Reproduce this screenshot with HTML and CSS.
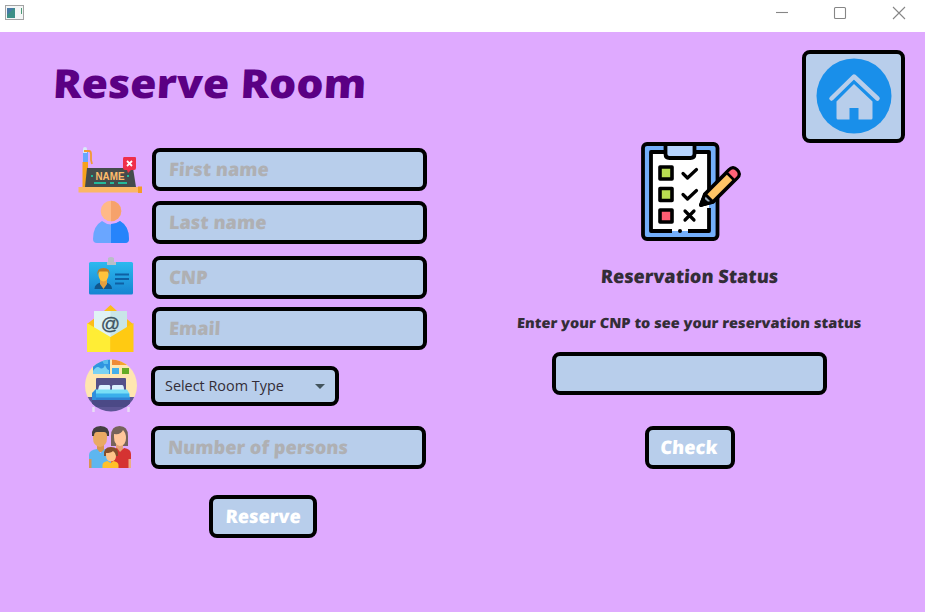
FILE: index.html
```html
<!DOCTYPE html>
<html lang="en">
<head>
<meta charset="utf-8">
<title>Reserve Room</title>
<link rel="stylesheet" href="styles.css">
</head>
<body>
<header class="titlebar">
  <svg class="app-icon" width="20" height="16" viewBox="5 5 20 16">
    <rect x="5.500" y="5.500" width="18" height="14" fill="#f4f6f6" stroke="#a3a3a3"/>
    <rect x="7" y="8" width="8" height="10" fill="#3c8f86"/><path d="M7 8h7l-7 7z" fill="#4779a5"/>
    <path d="M21.500 8v6" stroke="#4d9a78"/>
  </svg>
  <svg class="window-controls" width="140" height="26" viewBox="770 0 140 26" fill="none" stroke="#868686" stroke-width="1.100">
    <path d="M776 12.500h12"/><rect x="834.500" y="7.500" width="11" height="11" rx="1"/><path d="M893 7l12 12M905 7l-12 12"/>
  </svg>
</header>
<main class="page">
  <section class="booking">
    <h1 class="title"><span class="eras">Reserve Room</span></h1>
    <div class="row first">
      <svg class="icon" width="80" height="43" viewBox="72 148 80 43">
        <path d="M83 151h5v11h-5z" fill="#69a7ff"/><path d="M83 149q0-2 2-2t2 2v4h-4z" fill="#d9e9f8"/>
        <path d="M82.500 162H88v26h-5.500z" fill="#f6a11d"/><path d="M84 151h5q2 0 2 3v6l1 4" fill="none" stroke="#f29a32" stroke-width="1.800"/>
        <path d="M87 168h46l3 19H85z" fill="#454b4c"/>
        <path d="M124 157h11q1 0 1 1v10q0 2-2 2h-3l-3 3-1-3h-2q-2 0-2-2v-9q0-2 1-2z" fill="#ef2f49"/>
        <path d="M127 161l5 5m0-5l-5 5" stroke="#fff" stroke-width="1.800"/>
        <path d="M94 183h12m4 0h4m4 0h9M91 176h2m34 0h2" stroke="#22b99b" stroke-width="1.800"/>
        <text x="95.500" y="180" textLength="29" lengthAdjust="spacingAndGlyphs" class="plate">NAME</text>
        <path d="M78.500 187H142v5.500H78.500z" fill="#fbb765"/><path d="M138 186.500h4v6.500h-4z" fill="#f59c23"/>
      </svg>
      <div class="field"><span class="eras hint">First name</span></div>
    </div>
    <div class="row last">
      <svg class="icon" width="80" height="43" viewBox="72 201 80 43">
        <circle cx="111" cy="211" r="10.300" fill="#ffb987"/><path d="M111 200.700a10.300 10.300 0 0 1 0 20.600z" fill="#f6a26b"/>
        <path d="M93 239q0-13 9-18 9 7 18 0 9 5 9 18 0 4-4 4H97q-4 0-4-4z" fill="#6aa6ff"/>
        <path d="M111 224q5 0 9-3 9 5 9 18 0 4-4 4h-14z" fill="#2684fb"/>
      </svg>
      <div class="field"><span class="eras hint">Last name</span></div>
    </div>
    <div class="row cnp">
      <svg class="icon" width="80" height="43" viewBox="72 256 80 43">
        <defs><linearGradient id="card" x2="0" y2="1"><stop stop-color="#2cb9ef"/><stop offset="1" stop-color="#1684d1"/></linearGradient></defs>
        <rect x="89" y="262" width="44" height="32.500" rx="1.500" fill="url(#card)"/>
        <path d="M108 258q3-2 6 0v4h2v3h-9v-3h1z" fill="#b9bec8"/>
        <path d="M94.500 289q0-5 6-6.500l2.500 2 3-2q6 1.500 6 6.500z" fill="#10578d"/>
        <path d="M100 280h7v4l-3.500 5-3.500-5z" fill="#e5a03f"/><ellipse cx="103.500" cy="275" rx="5" ry="6.500" fill="#ffc33b"/>
        <path d="M97.500 275q-1-7 6-7t6 7l-1.500-3.500q-5 0-9 0z" fill="#c2791f"/>
        <path d="M115 274.500h14m-14 4.500h14m-14 4.500h9" stroke="#0e60a3" stroke-width="1.800"/>
      </svg>
      <div class="field"><span class="eras hint">CNP</span></div>
    </div>
    <div class="row email">
      <svg class="icon" width="80" height="43" viewBox="72 307 80 43">
        <path d="M87 324l17-13 6.500-6 6.500 6 16 13v28H87z" fill="#fdbd19"/>
        <path d="M94 311h33v26H94z" fill="#e0f3f4"/><path d="M110.500 311H127v26h-16.500z" fill="#c9e5e8"/>
        <path d="M87 323l23.500 14v15H87z" fill="#ffed35"/><path d="M133.500 323l-23 14v15h23z" fill="#ffca12"/>
        <text x="110.500" y="330" text-anchor="middle" class="at">@</text>
      </svg>
      <div class="field"><span class="eras hint">Email</span></div>
    </div>
    <div class="row room">
      <svg class="icon" width="79" height="40" viewBox="72 366 79 40">
        <defs><clipPath id="round"><circle cx="111" cy="385.500" r="26"/></clipPath></defs>
        <g clip-path="url(#round)">
          <path d="M85 359h52v40H85z" fill="#ffe6b0"/><path d="M85 397h52v15H85z" fill="#5c5595"/>
          <path d="M93 359h17v15H93z" fill="#2f94e0"/><path d="M93 371q4-6 7-3 3 2 5-3 2 5 4 5v4H93z" fill="#7ad2f2"/><path d="M101 359h7v5h-4z" fill="#58bdee"/>
          <path d="M112 359h8v6h-8z" fill="#f08a35"/><path d="M120 361h10v4h-10z" fill="#f5a52e"/>
          <path d="M112 368h7v6h-7z" fill="#45afea"/><path d="M122 368h7v6h-7z" fill="#66ab25"/>
          <path d="M96 379q0-1 1-1h28q1 0 1 1v15H96z" fill="#555089"/>
          <path d="M99 386q0-1 2-1h8q2 0 1 5H98zm13 0q0-1 2-1h8q2 0 2 5h-12z" fill="#dcf1ff"/>
          <path d="M95 389.500h32l3 5H93z" fill="#78dff6"/><path d="M94 393.500h35l1 5H92z" fill="#3aafeb"/>
          <path d="M92 397.500h38v3H92z" fill="#2f82d4"/><path d="M92 400h38v7H92z" fill="#4b4986"/>
          <path d="M92 393l4-4v11h-4z" fill="#308fdd"/>
        </g>
        <path d="M93.500 407v5m35-5v5" stroke="#e8dcf5" stroke-width="2.500"/>
      </svg>
      <div class="field select"><span class="choice">Select Room Type</span><span class="caret"></span></div>
    </div>
    <div class="row persons">
      <svg class="icon" width="79" height="43" viewBox="72 426 79 43">
        <path d="M111 446v-10q0-10 8.500-10t8.500 10v10z" fill="#76635b"/>
        <path d="M97 442h7v10h-7z" fill="#d99550"/><path d="M93 432q0-4 7-4t7 4v6q0 8-7 9-7-1-7-9z" fill="#e9a963"/>
        <path d="M92 436q-1-10 8.500-10t8.500 10h-2q0-4-3-4h-7q-3 0-3 4z" fill="#433e40"/>
        <path d="M89 455q0-5 8-6l3.500 4 4-4q5 1 7 4v15H89z" fill="#5eb6ef"/><path d="M89 459h2.500v9H89z" fill="#d99550"/>
        <path d="M116 443h7v9h-7z" fill="#e5a277"/><path d="M114 434q7 1 9-4 3 3 3 8 0 7-6 8-6-1-6-9z" fill="#ffc69b"/>
        <path d="M111 450l6-2 3 4 4-4q7 1 7 6v14h-20z" fill="#d53332"/><path d="M128.500 459h2.500v9h-2.500z" fill="#ecae82"/>
        <path d="M104 456q-1-9 7-9t7 9z" fill="#844d2c"/><path d="M106 453q5 0 7-2 3 2 3 5 0 5-5 5.500-5-.5-5-6z" fill="#ffc389"/>
        <path d="M102.500 468v-3q0-3 5-4l3 2 3-2q5 1 5 4v3z" fill="#ffc12a"/>
      </svg>
      <div class="field"><span class="eras hint">Number of persons</span></div>
    </div>
    <button class="btn reserve"><span class="eras">Reserve</span></button>
  </section>
  <section class="status">
    <button class="home" aria-label="Home">
      <svg width="76" height="76" viewBox="815.500 57.500 76 76">
        <circle cx="853.500" cy="95.500" r="37.500" fill="#198fea"/>
        <path d="M831 98l22.500-22L877 98" fill="none" stroke="#b8ceeb" stroke-width="4.500" stroke-linecap="round" stroke-linejoin="round"/>
        <path d="M836 101l17.500-17.500L872 101v16.500q0 1.500-1.500 1.500H858v-11.500h-9V119h-11.500q-1.500 0-1.500-1.500z" fill="#b8ceeb"/>
      </svg>
    </button>
    <svg class="clipboard" width="100" height="100" viewBox="641 141 100 100" stroke="#000" stroke-width="3.800" stroke-linecap="round" stroke-linejoin="round">
      <rect x="643" y="144" width="74.500" height="95" rx="4" fill="#73aefa"/>
      <path d="M651 152h58v79h-58z" fill="#fff" stroke="none"/>
      <path d="M672 231h-21v-79h58v42M709 208v23h-21" fill="none" stroke-linecap="butt"/>
      <path d="M665.500 144h29v10q0 4-4 4h-21q-4 0-4-4z" fill="#b7d5ff"/>
      <g stroke-width="3.600"><path d="M660 167h12v12h-12zM660 188.500h12v12h-12z" fill="#b9dc51"/><path d="M660 210h12v12h-12z" fill="#ff5d72"/></g>
      <path d="M683 173.500l4.500 4.500 9-8.500M683 194.500l4.500 4.500 9-8.500M685 211l9 9m0-9l-9 9" fill="none" stroke-width="3.200"/>
      <circle cx="680" cy="231" r="2" fill="#000" stroke="none"/>
      <path d="M701 205l4-11 24-24q4-4 8 0t0 8l-24 24z" fill="#ffc466"/>
      <path d="M726.500 172.500l2.500-2.500q4-4 8 0t0 8l-2.500 2.500z" fill="#ff6378" stroke-width="2.500"/>
      <path d="M701 205l4-11 8 8z" fill="#9bacbd" stroke-width="3"/><path d="M701 205l2-5 3.500 3z" fill="#000"/>
    </svg>
    <h2 class="status-title"><span class="eras">Reservation Status</span></h2>
    <p class="prompt"><span class="eras">Enter your CNP to see your reservation status</span></p>
    <div class="field lookup"></div>
    <button class="btn check"><span class="eras">Check</span></button>
  </section>
</main>
</body>
</html>
```
FILE: styles.css
```css
* { box-sizing: border-box; }
body { margin: 0; width: 925px; height: 612px; overflow: hidden; background: #dfaaff; color: #332d37; font-family: "Open Sans", sans-serif; }
svg { display: block; overflow: visible; flex: none; }
h1, h2, p { margin: 0; }
.titlebar { display: flex; justify-content: space-between; height: 32px; padding: 0 15px 0 5px; background: #fff; }
.app-icon { margin-top: 5px; }
.page { display: grid; grid-template-columns: 440px 485px; height: 580px; }
.booking { padding-left: 72px; }
.eras { display: inline-block; white-space: nowrap; font-weight: 800; transform-origin: left center; transform: skewX(-3deg) scaleX(0.985); }
.title { height: 60px; margin: 21px 0 35px -19px; line-height: 60px; font-size: 40px; color: #5b0084; }
.title .eras { transform: skewX(-3deg) scaleX(1.068); }
.row { display: flex; }
.field { display: flex; align-items: center; width: 275px; height: 43px; padding-left: 13px; background: #b8ceeb; border: 4px solid #000; border-radius: 8px; }
.hint { font-size: 18.500px; line-height: 33px; padding-bottom: 2px; color: #afb0b3; }
.last { margin-top: 10px; }
.cnp { margin-top: 12px; }
.email { margin-top: 8px; }
.room { margin-top: 16px; }
.persons { margin-top: 20px; }
.select { justify-content: space-between; width: 188px; height: 40px; padding: 0 10px 0 10px; }
.choice { margin-top: -2px; font-size: 15px; white-space: nowrap; transform-origin: left center; transform: scaleX(0.96); }
.caret { border: 5px solid transparent; border-top-color: #43545d; border-bottom: 0; }
.btn { display: flex; align-items: center; justify-content: center; height: 43px; padding: 0 0 2px; border: 4px solid #000; border-radius: 8px; background: #b8ceeb; color: #fff; font-family: inherit; font-size: 18.500px; }
.btn .eras { transform-origin: center; }
.reserve { width: 108px; margin: 26px 0 0 137px; }
.status { display: flex; flex-direction: column; align-items: center; padding-left: 14px; }
.home { display: flex; align-items: center; justify-content: center; align-self: flex-end; width: 103px; height: 93px; margin: 17.500px 20px 0 0; padding: 0; border: 4px solid #000; border-radius: 8px; background: #b8ceeb; }
.clipboard { margin: -1.500px 0 0 2px; }
.status-title { height: 30px; margin-top: 20px; line-height: 30px; font-size: 18.500px; }
.prompt { height: 24px; margin-top: 20px; line-height: 24px; font-size: 14px; }
.status-title .eras { transform-origin: center; transform: skewX(-3deg) scaleX(0.98); }
.prompt .eras { transform-origin: center; transform: skewX(-3deg) scaleX(1.043); }
.lookup { margin-top: 17px; }
.check { width: 90px; margin-top: 31px; }
.plate { font: 800 11px "Liberation Sans", sans-serif; fill: #ffbe6c; }
.at { font: 400 19px "Liberation Sans", sans-serif; fill: #40545f; stroke: #40545f; stroke-width: 0.3px; }
```
